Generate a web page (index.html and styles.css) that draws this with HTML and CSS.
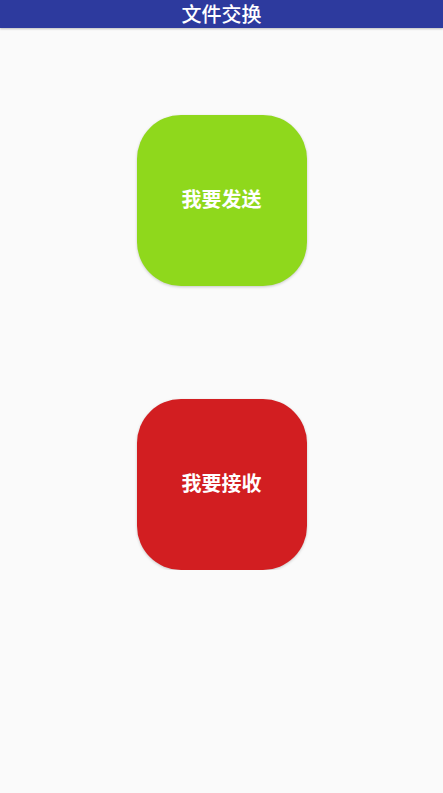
FILE: index.html
```html
<!DOCTYPE html>
<html lang="zh">
<head>
<meta charset="utf-8">
<link rel="stylesheet" href="styles.css">
</head>
<body>
<header class="bar">文件交换</header>
<main class="content">
  <button class="tile tile-send">我要发送</button>
  <button class="tile tile-recv">我要接收</button>
</main>
</body>
</html>
```
FILE: styles.css
```css
html, body {
  margin: 0;
  padding: 0;
  background: #fafafa;
  font-family: "Noto Sans CJK SC", "Noto Sans", sans-serif;
}
.bar {
  height: 28px;
  background: #2d3a9e;
  color: #ffffff;
  font-size: 20px;
  font-weight: 500;
  line-height: 28px;
  text-align: center;
  box-shadow: 0 1px 2px rgba(0,0,0,0.25);
}
.content {
  display: flex;
  flex-direction: column;
  align-items: center;
  padding-top: 87px;
  gap: 113px;
}
.tile {
  display: flex;
  align-items: center;
  justify-content: center;
  width: 170px;
  height: 171px;
  border: none;
  border-radius: 44px;
  color: #ffffff;
  font-family: "Noto Sans CJK SC", "Noto Sans", sans-serif;
  font-size: 20px;
  line-height: 1;
  font-weight: 700;
  box-shadow: 0 1px 3px rgba(0,0,0,0.2);
  padding: 0 0 4px 0;
}
.tile-send { background: #8fd81c; }
.tile-recv { background: #d21e21; }
```
